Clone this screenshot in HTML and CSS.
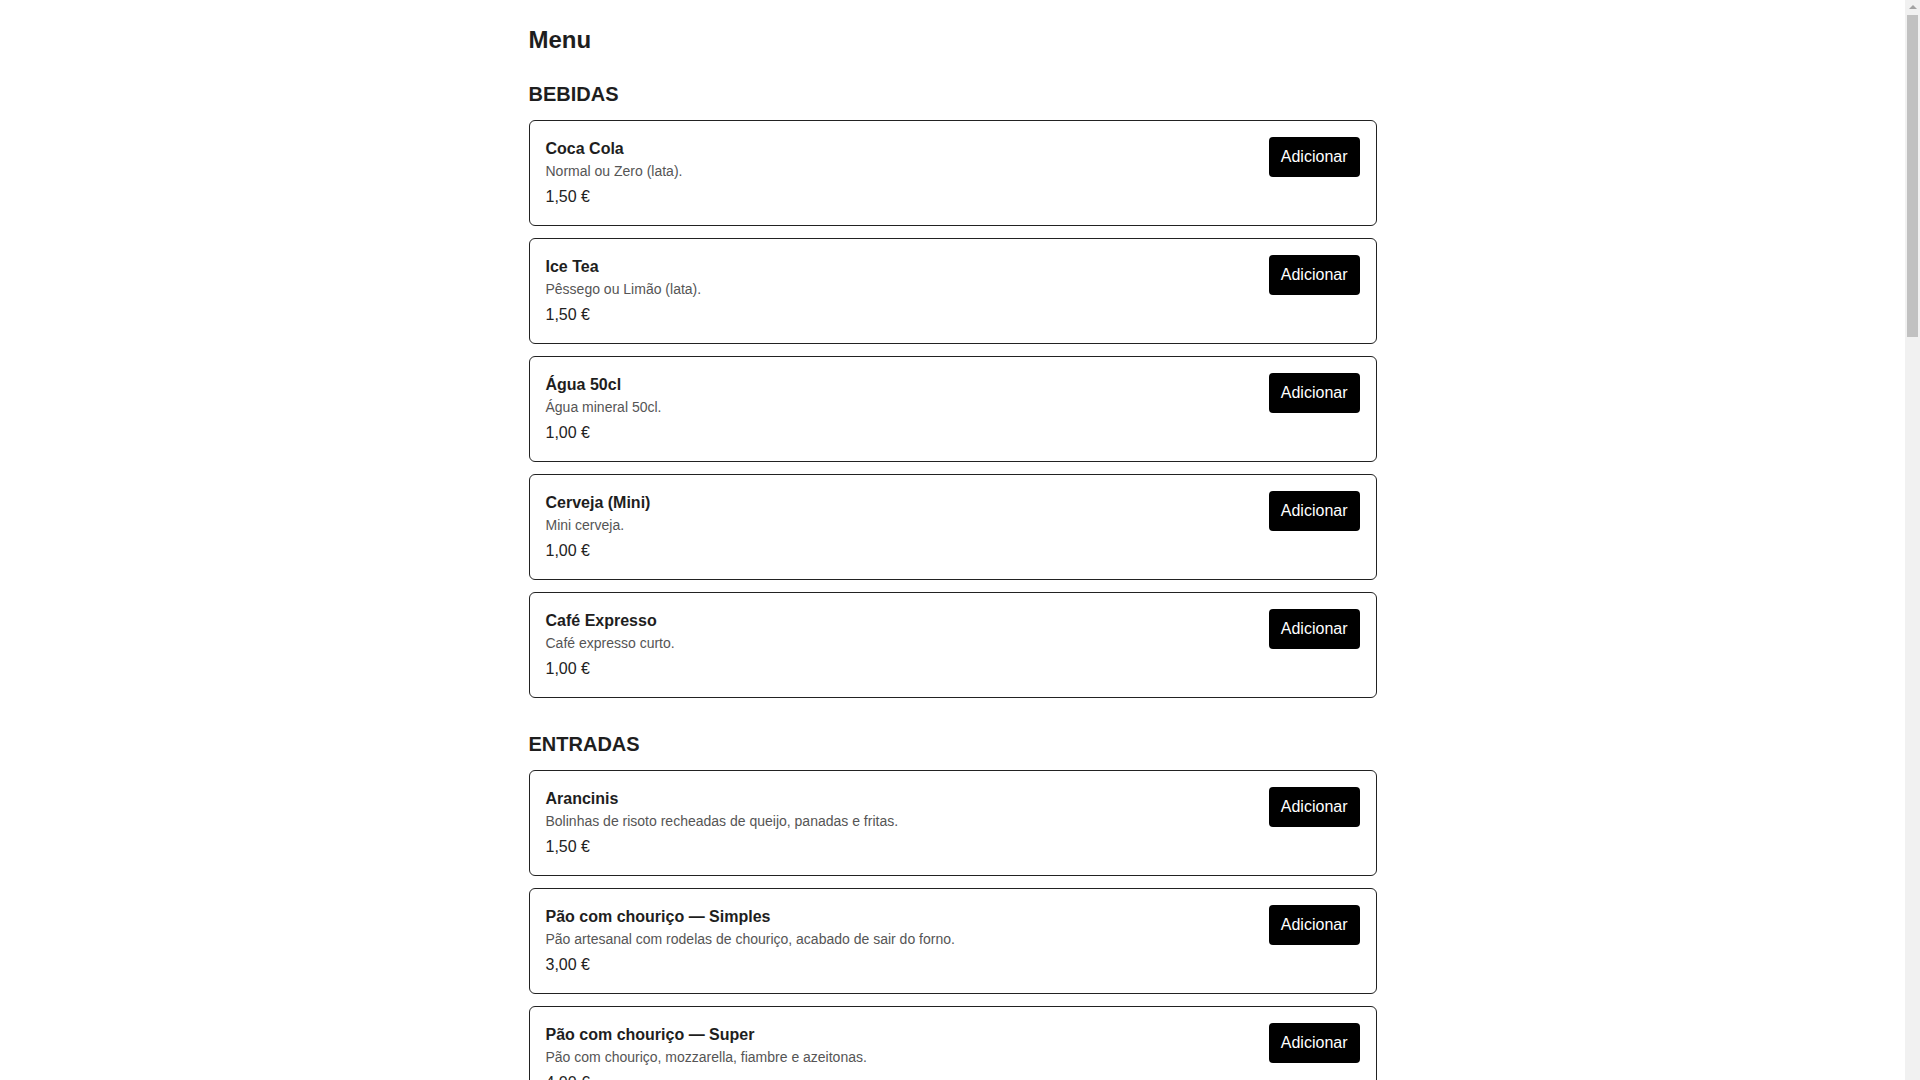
FILE: index.html
```html
<!DOCTYPE html>
<html lang="pt">
<head>
<meta charset="utf-8">
<title>Menu</title>
<link rel="stylesheet" href="styles.css">
</head>
<body>
<main class="page">
  <h1 class="page-title">Menu</h1>

  <section class="category">
    <h2 class="category-title">BEBIDAS</h2>
    <div class="item-list">
      <article class="item">
        <div class="item-info">
          <div class="item-name">Coca Cola</div>
          <div class="item-desc">Normal ou Zero (lata).</div>
          <div class="item-price">1,50 €</div>
        </div>
        <button class="add-btn" type="button">Adicionar</button>
      </article>
      <article class="item">
        <div class="item-info">
          <div class="item-name">Ice Tea</div>
          <div class="item-desc">Pêssego ou Limão (lata).</div>
          <div class="item-price">1,50 €</div>
        </div>
        <button class="add-btn" type="button">Adicionar</button>
      </article>
      <article class="item">
        <div class="item-info">
          <div class="item-name">Água 50cl</div>
          <div class="item-desc">Água mineral 50cl.</div>
          <div class="item-price">1,00 €</div>
        </div>
        <button class="add-btn" type="button">Adicionar</button>
      </article>
      <article class="item">
        <div class="item-info">
          <div class="item-name">Cerveja (Mini)</div>
          <div class="item-desc">Mini cerveja.</div>
          <div class="item-price">1,00 €</div>
        </div>
        <button class="add-btn" type="button">Adicionar</button>
      </article>
      <article class="item">
        <div class="item-info">
          <div class="item-name">Café Expresso</div>
          <div class="item-desc">Café expresso curto.</div>
          <div class="item-price">1,00 €</div>
        </div>
        <button class="add-btn" type="button">Adicionar</button>
      </article>
    </div>
  </section>

  <section class="category">
    <h2 class="category-title">ENTRADAS</h2>
    <div class="item-list">
      <article class="item">
        <div class="item-info">
          <div class="item-name">Arancinis</div>
          <div class="item-desc">Bolinhas de risoto recheadas de queijo, panadas e fritas.</div>
          <div class="item-price">1,50 €</div>
        </div>
        <button class="add-btn" type="button">Adicionar</button>
      </article>
      <article class="item">
        <div class="item-info">
          <div class="item-name">Pão com chouriço — Simples</div>
          <div class="item-desc">Pão artesanal com rodelas de chouriço, acabado de sair do forno.</div>
          <div class="item-price">3,00 €</div>
        </div>
        <button class="add-btn" type="button">Adicionar</button>
      </article>
      <article class="item">
        <div class="item-info">
          <div class="item-name">Pão com chouriço — Super</div>
          <div class="item-desc">Pão com chouriço, mozzarella, fiambre e azeitonas.</div>
          <div class="item-price">4,00 €</div>
        </div>
        <button class="add-btn" type="button">Adicionar</button>
      </article>
    </div>
  </section>
</main>

<div class="scrollbar" aria-hidden="true">
  <div class="scroll-arrow"></div>
  <div class="scroll-thumb"></div>
</div>
</body>
</html>
```

FILE: styles.css
```css
html, body {
  margin: 0;
  padding: 0;
  background: #ffffff;
}

body {
  font-family: "Liberation Sans", Arial, sans-serif;
  color: #222222;
  padding-right: 15px;
}

.page {
  max-width: 848px;
  margin: 0 auto;
  padding: 26px 0 40px;
}

.page-title {
  margin: 0;
  font-size: 24px;
  line-height: 1.2;
  font-weight: 700;
  color: #1e1e1e;
}

.category {
  margin-top: 34px;
}

.page-title + .category {
  margin-top: 27px;
}

.category-title {
  margin: 0 0 14px;
  font-size: 20px;
  line-height: 1.2;
  font-weight: 700;
  color: #1e1e1e;
}

.item-list {
  display: flex;
  flex-direction: column;
  gap: 12px;
}

.item {
  display: flex;
  justify-content: space-between;
  align-items: flex-start;
  gap: 16px;
  padding: 16px;
  border: 1px solid #222222;
  border-radius: 6px;
}

.item-info {
  display: flex;
  flex-direction: column;
}

.item-name {
  font-size: 16px;
  line-height: 1.5;
  font-weight: 700;
  color: #1e1e1e;
}

.item-desc {
  font-size: 14px;
  line-height: 1.5;
  color: #555555;
}

.item-price {
  margin-top: 3px;
  font-size: 16px;
  line-height: 1.5;
  color: #222222;
}

.add-btn {
  flex: none;
  margin: 0;
  padding: 10px 12px;
  font-family: "Liberation Sans", Arial, sans-serif;
  font-size: 16px;
  line-height: 20px;
  color: #ffffff;
  background: #000000;
  border: none;
  border-radius: 4px;
  cursor: pointer;
}

/* simulated classic browser scrollbar */
.scrollbar {
  position: fixed;
  top: 0;
  right: 0;
  bottom: 0;
  width: 15px;
  background: #f1f1f1;
  display: flex;
  flex-direction: column;
  align-items: center;
}

.scroll-arrow {
  flex: none;
  width: 0;
  height: 0;
  margin-top: 5px;
  margin-bottom: 6px;
  border-left: 4px solid transparent;
  border-right: 4px solid transparent;
  border-bottom: 4px solid #a3a3a3;
}

.scroll-thumb {
  width: 11px;
  height: 322px;
  background: #c1c1c1;
}
```
